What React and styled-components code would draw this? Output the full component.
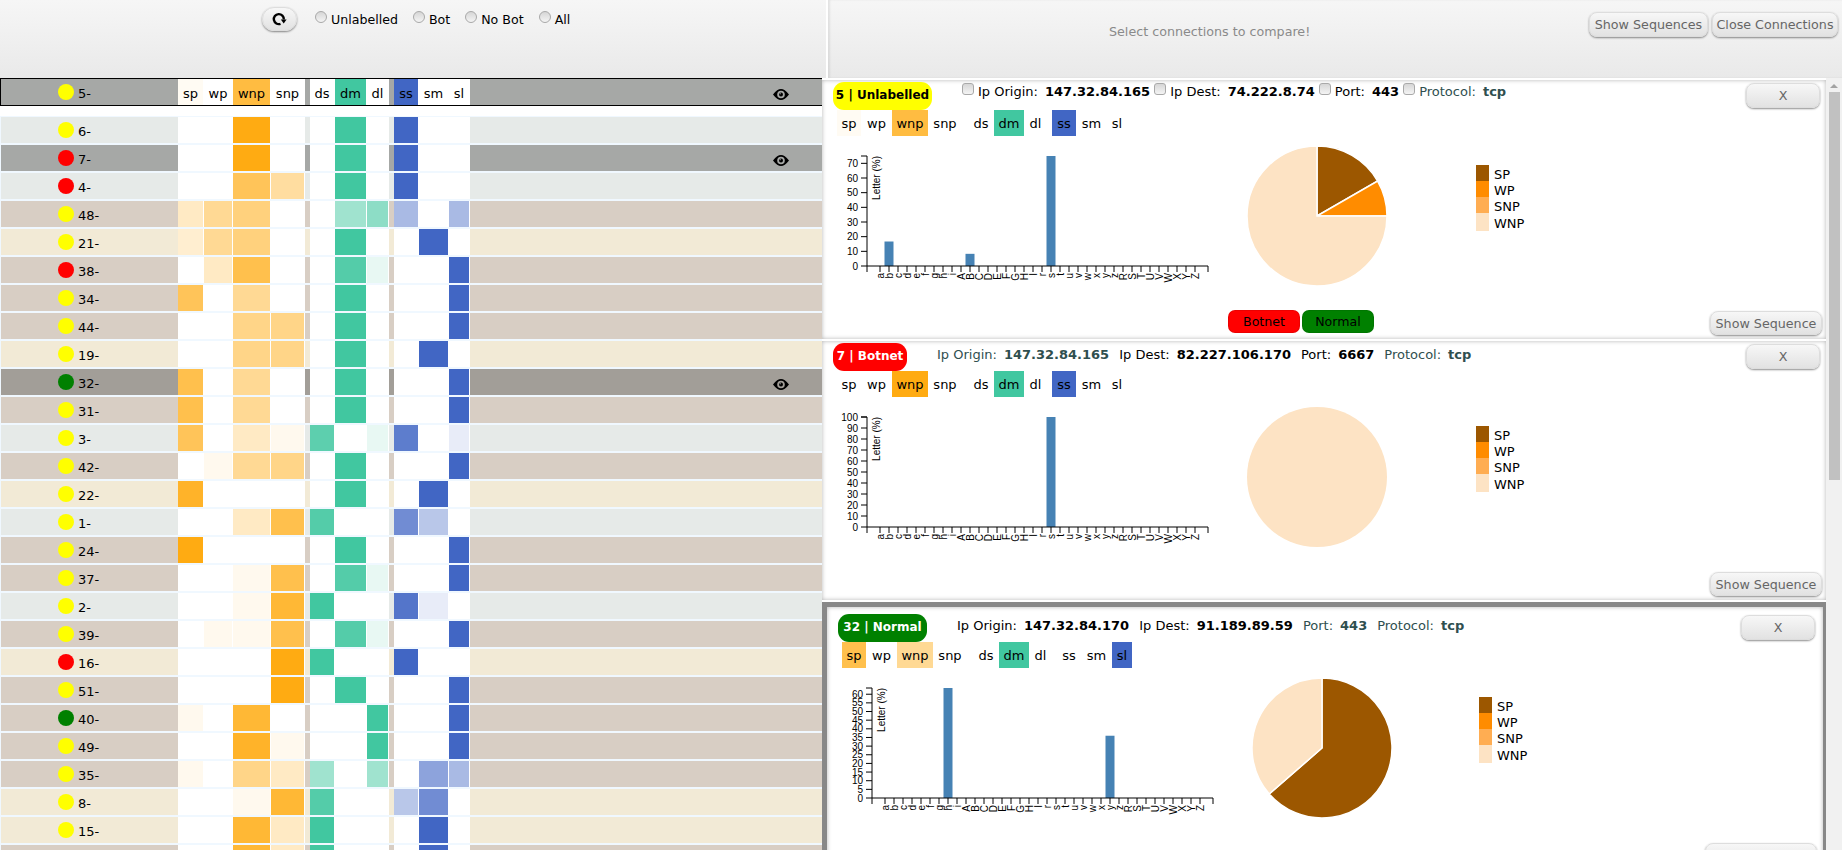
import React from "react";
import styled, { createGlobalStyle } from "styled-components";

const ORANGE = "255, 171, 18";
const TEAL = "65, 199, 160";
const BLUE = "65, 102, 196";

const ROW_COLORS = {
  tan: "#d8cec4",
  cream: "#f2ead6",
  light: "#e6eae8",
  picked: "#a6a8a6",
  pickedTan: "#a29e98",
};

const STATUS = { y: "#ffff00", r: "#ff0000", g: "#008000" };

const groups = [
  { color: ORANGE, width: 127, labels: ["sp", "wp", "wnp", "snp"], cells: [25, 28, 37, 33] },
  { color: TEAL, width: 79, labels: ["ds", "dm", "dl"], cells: [24, 31, 21] },
  { color: BLUE, width: 76, labels: ["ss", "sm", "sl"], cells: [24, 29, 20] },
];

const rows = [
  ["6", "y", "light", [0, 0, 1, 0], [0, 1, 0], [1, 0, 0]],
  ["7", "r", "picked", [0, 0, 1, 0], [0, 1, 0], [1, 0, 0], true],
  ["4", "r", "light", [0, 0, 0.7, 0.4], [0, 1, 0], [1, 0, 0]],
  ["48", "y", "tan", [0.25, 0.45, 0.55, 0], [0, 0.5, 0.6], [0.45, 0, 0.45]],
  ["21", "y", "cream", [0.2, 0.45, 0.55, 0], [0, 1, 0], [0, 1, 0]],
  ["38", "r", "tan", [0, 0.25, 0.75, 0], [0, 0.9, 0.12], [0, 0, 1]],
  ["34", "y", "tan", [0.7, 0, 0.45, 0], [0, 1, 0], [0, 0, 1]],
  ["44", "y", "tan", [0, 0, 0.5, 0.5], [0, 1, 0], [0, 0, 1]],
  ["19", "y", "cream", [0, 0, 0.5, 0.5], [0, 1, 0], [0, 1, 0]],
  ["32", "g", "pickedTan", [0.75, 0, 0.45, 0], [0, 1, 0], [0, 0, 1], true],
  ["31", "y", "tan", [0.75, 0, 0.45, 0], [0, 1, 0], [0, 0, 1]],
  ["3", "y", "light", [0.7, 0, 0.25, 0.07], [0.85, 0, 0.12], [0.85, 0, 0.12]],
  ["42", "y", "tan", [0, 0.07, 0.45, 0.5], [0, 1, 0], [0, 0, 1]],
  ["22", "y", "cream", [0.9, 0, 0, 0], [0, 1, 0], [0, 1, 0]],
  ["1", "y", "light", [0, 0, 0.25, 0.75], [0.9, 0, 0], [0.75, 0.37, 0]],
  ["24", "y", "tan", [1, 0, 0, 0], [0, 1, 0], [0, 0, 1]],
  ["37", "y", "tan", [0, 0, 0.07, 0.75], [0, 0.9, 0.12], [0, 0, 1]],
  ["2", "y", "light", [0, 0, 0.07, 0.85], [1, 0, 0], [0.9, 0.12, 0]],
  ["39", "y", "tan", [0, 0.07, 0.07, 0.75], [0, 0.9, 0.12], [0, 0, 1]],
  ["16", "r", "cream", [0, 0, 0, 1], [1, 0, 0], [1, 0, 0]],
  ["51", "y", "tan", [0, 0, 0, 1], [0, 1, 0], [0, 0, 1]],
  ["40", "g", "tan", [0.07, 0, 0.85, 0], [0, 0, 1], [0, 0, 1]],
  ["49", "y", "tan", [0, 0, 0.9, 0.07], [0, 0, 1], [0, 0, 1]],
  ["35", "y", "tan", [0.07, 0, 0.5, 0.25], [0.5, 0, 0.5], [0, 0.6, 0.45]],
  ["8", "y", "cream", [0, 0, 0.07, 0.85], [0.9, 0, 0], [0.37, 0.75, 0]],
  ["15", "y", "cream", [0, 0, 0.85, 0.25], [1, 0, 0], [0, 1, 0]],
  // last row only shows its top edge, the name is below the fold
  [null, null, "tan", [0, 0, 0.85, 0.25], [1, 0, 0], [0, 1, 0]],
];

const LETTERS = "abcdefghiABCDEFGHIrstuvwxyzRSTUVWXYZ".split("");
const SLATE = "#2f4f4f";

const cards = [
  {
    title: "5 | Unlabelled",
    badge: "#ffff00",
    badgeText: "#000",
    badgeWidth: 99,
    checks: true,
    fields: [
      ["Ip Origin:", "147.32.84.165"],
      ["Ip Dest:", "74.222.8.74"],
      ["Port:", "443"],
      ["Protocol:", "tcp", SLATE],
    ],
    chips: [[0.05, 0, 0.8, 0], [0, 1, 0], [1, 0, 0]],
    yMax: 75,
    yStep: 10,
    bars: [[1, 16.7], [10, 8.3], [19, 75]],
    slices: [["#9c5700", 16.67], ["#ff8c00", 8.33], ["#fde3c4", 75]],
    vote: true,
  },
  {
    title: "7 | Botnet",
    badge: "#ff0000",
    badgeText: "#fff",
    badgeWidth: 74,
    fields: [
      ["Ip Origin:", "147.32.84.165", SLATE],
      ["Ip Dest:", "82.227.106.170"],
      ["Port:", "6667"],
      ["Protocol:", "tcp", SLATE],
    ],
    chips: [[0, 0, 1, 0], [0, 1, 0], [1, 0, 0]],
    yMax: 100,
    yStep: 10,
    bars: [[19, 100]],
    slices: [["#fde3c4", 100]],
  },
  {
    title: "32 | Normal",
    badge: "#008000",
    badgeText: "#fff",
    badgeWidth: 89,
    selected: true,
    fields: [
      ["Ip Origin:", "147.32.84.170"],
      ["Ip Dest:", "91.189.89.59"],
      ["Port:", "443", SLATE],
      ["Protocol:", "tcp", SLATE],
    ],
    chips: [[0.75, 0, 0.45, 0], [0, 1, 0], [0, 0, 1]],
    yMax: 63.6,
    yStep: 5,
    bars: [[7, 63.6], [25, 36]],
    slices: [["#9c5700", 63.6], ["#fde3c4", 36.4]],
  },
];

const legend = [
  ["SP", "#9c5700", 16],
  ["WP", "#ff8c00", 16],
  ["SNP", "#ffad52", 16],
  ["WNP", "#fde3c4", 18],
];

const chipWidths = [[24, 31, 36, 34], [26, 30, 23], [24, 31, 20]];

const GlobalStyle = createGlobalStyle`
  html, body {
    margin: 0;
    height: 100%;
    overflow: hidden;
    background: #fff;
  }
  body {
    font-family: "DejaVu Sans", sans-serif;
    font-size: 13px;
    color: #000;
  }
`;

const Page = styled.div`
  display: flex;
  height: 100vh;
  overflow: hidden;
`;

const LeftColumn = styled.div`
  width: 822px;
  flex: none;
  display: flex;
  flex-direction: column;
`;

const RightColumn = styled.div`
  width: 1020px;
  flex: none;
  display: flex;
  flex-direction: column;
`;

const TopBar = styled.div`
  display: flex;
  flex: none;
  height: 78px;
  box-sizing: border-box;
  background: linear-gradient(#f6f6f6, #e9e9e9);
`;

const LeftBar = styled(TopBar)`
  margin-right: -4px;
  padding-left: 262px;
`;

const RightBar = styled(TopBar)`
  margin-left: 6px;
  padding-right: 4px;
  box-shadow: inset 2px 0 2px rgba(0, 0, 0, 0.08);
`;

const RoundButton = styled.button`
  box-sizing: border-box;
  font: inherit;
  font-size: 12.7px;
  padding: 0;
  color: #666;
  border: 1px solid #ddd;
  border-radius: 8px;
  background: linear-gradient(#f7f7f7, #e2e2e2);
  box-shadow: 0 1px 2px rgba(0, 0, 0, 0.45);
`;

const RefreshButton = styled(RoundButton)`
  display: flex;
  align-items: center;
  justify-content: center;
  width: 35px;
  height: 24px;
  margin-top: 7px;
  margin-right: 18px;
  border-radius: 12px;
`;

const RadioLabel = styled.label`
  display: flex;
  align-items: flex-start;
  margin-right: 15px;
  font-size: 12.6px;
`;

const RoundInput = styled.input`
  appearance: none;
  width: 12px;
  height: 12px;
  margin: 0 4px 0 0;
  flex: none;
  box-sizing: border-box;
  border: 1px solid #a9a9a9;
  background: linear-gradient(#d6d6d6, #f4f4f4);
`;

const Radio = styled(RoundInput)`
  margin-top: 11px;
  border-radius: 50%;
`;

const RadioText = styled.span`
  margin-top: 12px;
  line-height: 16px;
`;

const Notice = styled.div`
  margin: 24px 0 0 281px;
  line-height: 16px;
  font-size: 12.7px;
  color: #8a8a8a;
`;

const BarButtons = styled.div`
  display: flex;
  gap: 4px;
  margin: 12px 0 0 auto;
`;

const BarButton = styled(RoundButton)`
  height: 25px;
  width: ${(p) => p.$w}px;
`;

const Row = styled.div`
  display: flex;
  flex: none;
  height: 26px;
  border-left: 1px solid #f0f8ff;
  background: ${(p) => ROW_COLORS[p.$bg]};
`;

const HeaderRow = styled(Row)`
  height: 28px;
  box-sizing: border-box;
  border: 1px solid #000;
  border-right: 0;
`;

const RowList = styled.div`
  flex: 1;
  min-height: 0;
  margin-top: 10px;
  padding-top: 1px;
  display: flex;
  flex-direction: column;
  gap: 2px;
  overflow: hidden;
  background: #f0f8ff;
`;

const NameCell = styled.div`
  display: flex;
  align-items: center;
  width: 177px;
  flex: none;
  box-sizing: border-box;
  padding-left: 57px;
`;

const RowName = styled.span`
  padding-top: 2px;
`;

const Dot = styled.span`
  width: 16px;
  height: 16px;
  margin-right: 4px;
  border-radius: 50%;
  background: ${(p) => STATUS[p.$status]};
`;

const CellGroup = styled.div`
  display: flex;
  flex: none;
  gap: 1px;
  width: ${(p) => p.$w}px;
  margin-right: 5px;
  background: #fff;
`;

const Cell = styled.div`
  display: flex;
  align-items: center;
  justify-content: center;
  flex: none;
  width: ${(p) => p.$w}px;
  background: rgba(${(p) => p.$rgb}, ${(p) => p.$o});
`;

const HeaderCell = styled(Cell)`
  padding-top: 2px;
`;

const RowEnd = styled.div`
  flex: 1;
  margin-left: -5px;
  display: flex;
  align-items: center;
  justify-content: flex-end;
  padding: 4px 33px 0 0;
`;

const Lower = styled.div`
  display: flex;
  flex: 1;
  min-height: 0;
`;

const CardColumn = styled.div`
  width: 1004px;
  flex: none;
  padding-top: 2px;
  display: flex;
  flex-direction: column;
  gap: 2px;
  overflow: hidden;
`;

const Card = styled.div`
  flex: none;
  box-sizing: border-box;
  height: 259px;
  padding: 2px 6px 0 11px;
  background: #fff;
  box-shadow: inset 0 0 4px rgba(0, 0, 0, 0.3);
`;

const SelectedCard = styled(Card)`
  height: 300px;
  padding: 7px 8px 0 11px;
  border: 5px solid #888;
  border-width: 5px 3px 0 5px;
`;

const CardHeader = styled.div`
  display: flex;
  align-items: flex-start;
  height: 28px;
`;

const Badge = styled.div`
  width: ${(p) => p.$w}px;
  height: 28px;
  line-height: 26px;
  flex: none;
  text-align: center;
  font-weight: bold;
  font-size: 12px;
  border-radius: 11px;
  color: ${(p) => p.$text};
  background: ${(p) => p.$bg};
`;

const Fields = styled.div`
  display: flex;
  gap: ${(p) => (p.$checks ? 4 : 10)}px;
  margin-left: 30px;
  margin-top: ${(p) => (p.$checks ? 2 : 4)}px;
  line-height: 16px;
  white-space: nowrap;
`;

const Field = styled.div`
  display: flex;
  align-items: flex-start;
  color: ${(p) => p.$color || "#000"};
`;

const Check = styled(RoundInput)`
  margin-top: -1px;
  border-radius: 3px;
`;

const FieldValue = styled.b`
  margin-left: 7px;
`;

const CloseButton = styled(RoundButton)`
  width: 74px;
  height: 25px;
  margin: 1px 0 0 auto;
`;

const Chips = styled.div`
  display: flex;
  height: 26px;
  margin-left: 4px;
`;

const ChipGroup = styled.div`
  display: flex;
  margin-right: ${(p) => p.$gap}px;
`;

const Body = styled.div`
  display: flex;
  align-items: flex-start;
  height: 173px;
`;

const PieBox = styled.svg`
  flex: none;
  margin: 5px 0 0 9px;
`;

const Legend = styled.div`
  display: flex;
  flex-direction: column;
  margin: 29px 0 0 ${(p) => (p.$selected ? 82 : 84)}px;
`;

const LegendRow = styled.div`
  display: flex;
  align-items: center;
  height: ${(p) => p.$h}px;
  line-height: 16px;
`;

const LegendName = styled.span`
  padding-top: 3px;
`;

const Swatch = styled.span`
  width: 13px;
  height: 100%;
  margin-right: 5px;
  background: ${(p) => p.$color};
`;

const Footer = styled.div`
  display: flex;
  align-items: flex-start;
  height: 26px;
`;

const VoteButton = styled.button`
  width: 72px;
  height: 23px;
  margin-right: 2px;
  padding: 0;
  font: inherit;
  font-size: 12.6px;
  color: #000;
  border: 1px solid rgba(0, 0, 0, 0.08);
  border-radius: 7px;
  background: ${(p) => p.$bg};
`;

const Votes = styled.div`
  display: flex;
  margin: 1px 0 0 395px;
`;

const SequenceButton = styled(RoundButton)`
  width: 112px;
  height: 24px;
  margin: 2px -2px 0 auto;
`;

const ScrollTrack = styled.div`
  width: 16px;
  flex: none;
  background: #f1f1f1;
  display: flex;
  flex-direction: column;
  align-items: center;
  padding-top: 6px;
`;

const ScrollArrow = styled.span`
  border: 4px solid transparent;
  border-top: 0;
  border-bottom: 4px solid #a3a3a3;
  margin-bottom: 4px;
`;

const ScrollThumb = styled.div`
  width: 11px;
  height: 388px;
  background: #c1c1c1;
`;

const AxisText = styled.text`
  font-family: "Liberation Sans", Arial, sans-serif;
  font-size: 10px;
  fill: #000;
`;

const RefreshIcon = () => (
  <svg width="15" height="15" viewBox="0 0 15 15">
    <path d="M8.5 11.8A5 5 0 1 1 11.8 7.5" fill="none" stroke="#000" strokeWidth="2.4" />
    <polygon points="8.8,7.5 14.6,7.5 11.7,11.4" fill="#000" />
  </svg>
);

const EyeIcon = () => (
  <svg width="16" height="11" viewBox="0 0 16 11">
    <path
      fillRule="evenodd"
      d="M0 5.5C3 1.5 5.5 0 8 0s5 1.5 8 5.5c-3 4-5.5 5.5-8 5.5S3 9.500 0 5.500zM8 1.700a3.800 3.800 0 1 0 0 7.600a3.800 3.800 0 1 0 0-7.600z"
    />
    <circle cx="8" cy="5.5" r="2" />
    <circle cx="7.200" cy="4.700" r="0.600" fill="#aaa" />
  </svg>
);

// d3 style bar chart, margins taken from the axis in the page
const BarChart = ({ yMax, yStep, bars }) => {
  const top = 20;
  const bottom = 130;
  const y = (v) => bottom - (v / yMax) * (bottom - top);
  const x = (i) => 47 + i * 9;
  const ticks = [];
  for (let v = 0; v <= yMax; v += yStep) ticks.push(v);
  return (
    <svg width="400" height="150" style={{ flex: "none" }}>
      {bars.map(([i, v]) => (
        <rect key={i} x={x(i) - 4.5} y={y(v)} width="9" height={bottom - y(v)} fill="#4682b4" />
      ))}
      <path d={`M28 ${top}H34V${bottom}H375V${bottom + 6}`} fill="none" stroke="#000" />
      <path d={`M34 ${bottom}V${bottom + 6}`} stroke="#000" />
      {ticks.map((v) => (
        <g key={v}>
          <line x1="28" x2="34" y1={y(v)} y2={y(v)} stroke="#000" />
          <AxisText x="25" y={y(v) + 3.5} textAnchor="end">{v}</AxisText>
        </g>
      ))}
      {LETTERS.map((l, i) => (
        <g key={l}>
          <line x1={x(i)} x2={x(i)} y1={bottom} y2={bottom + 6} stroke="#000" />
          <AxisText
            textAnchor="end"
            transform={`translate(${x(i) + 3.5},${bottom + 7}) rotate(-90)`}
          >
            {l}
          </AxisText>
        </g>
      ))}
      <AxisText textAnchor="end" transform={`translate(47,${top}) rotate(-90)`}>
        Letter (%)
      </AxisText>
    </svg>
  );
};

const Pie = ({ slices }) => {
  const r = 70;
  let start = 0;
  return (
    <PieBox width="150" height="150" viewBox="-75 -75 150 150">
      {slices.map(([color, pct]) => {
        if (pct === 100) return <circle key={color} r={r} fill={color} />;
        const a0 = (start / 100) * 2 * Math.PI;
        const a1 = ((start + pct) / 100) * 2 * Math.PI;
        start += pct;
        const big = pct > 50 ? 1 : 0;
        const d = `M0 0L${r * Math.sin(a0)} ${-r * Math.cos(a0)}A${r} ${r} 0 ${big} 1 ${r * Math.sin(a1)} ${-r * Math.cos(a1)}Z`;
        return <path key={color} d={d} fill={color} stroke="#fff" strokeWidth="1.5" />;
      })}
    </PieBox>
  );
};

const ConnectionCard = ({ card }) => {
  const Box = card.selected ? SelectedCard : Card;
  return (
    <Box>
      <CardHeader>
        <Badge $w={card.badgeWidth} $bg={card.badge} $text={card.badgeText}>
          {card.title}
        </Badge>
        <Fields $checks={card.checks}>
          {card.fields.map(([label, value, color]) => (
            <Field key={label} $color={color}>
              {card.checks && <Check type="checkbox" readOnly />}
              {label}
              <FieldValue>{value}</FieldValue>
            </Field>
          ))}
        </Fields>
        <CloseButton>X</CloseButton>
      </CardHeader>
      <Chips>
        {groups.map((g, gi) => (
          <ChipGroup key={gi} $gap={gi === 0 ? 6 : gi === 1 ? 5 : 0}>
            {g.labels.map((l, i) => (
              <Cell key={l} $w={chipWidths[gi][i]} $rgb={g.color} $o={card.chips[gi][i]}>
                {l}
              </Cell>
            ))}
          </ChipGroup>
        ))}
      </Chips>
      <Body>
        <BarChart yMax={card.yMax} yStep={card.yStep} bars={card.bars} />
        <Pie slices={card.slices} />
        <Legend $selected={card.selected}>
          {legend.map(([name, color, h]) => (
            <LegendRow key={name} $h={h}>
              <Swatch $color={color} />
              <LegendName>{name}</LegendName>
            </LegendRow>
          ))}
        </Legend>
      </Body>
      <Footer>
        {card.vote && (
          <Votes>
            <VoteButton $bg="#ff0000">Botnet</VoteButton>
            <VoteButton $bg="#008000">Normal</VoteButton>
          </Votes>
        )}
        {/* the selected card's label falls below the window, only its top edge shows */}
        <SequenceButton>{card.selected ? null : "Show Sequence"}</SequenceButton>
      </Footer>
    </Box>
  );
};

const RowCells = ({ values, labelled }) =>
  groups.map((g, gi) => (
    <CellGroup key={gi} $w={g.width}>
      {g.cells.map((w, i) =>
        labelled ? (
          <HeaderCell key={i} $w={w} $rgb={g.color} $o={values[gi][i]}>
            {g.labels[i]}
          </HeaderCell>
        ) : (
          <Cell key={i} $w={w} $rgb={g.color} $o={values[gi][i]} />
        )
      )}
    </CellGroup>
  ));

const App = () => {
  return (
    <Page>
      <GlobalStyle />
      <LeftColumn>
        <LeftBar>
          <RefreshButton>
            <RefreshIcon />
          </RefreshButton>
          {["Unlabelled", "Bot", "No Bot", "All"].map((name) => (
            <RadioLabel key={name}>
              <Radio type="radio" name="filter" />
              <RadioText>{name}</RadioText>
            </RadioLabel>
          ))}
        </LeftBar>
        <HeaderRow $bg="picked">
          <NameCell>
            <Dot $status="y" />
            <RowName>5-</RowName>
          </NameCell>
          <RowCells labelled values={[[0.05, 0, 0.8, 0], [0, 1, 0], [1, 0, 0]]} />
          <RowEnd>
            <EyeIcon />
          </RowEnd>
        </HeaderRow>
        <RowList>
          {rows.map(([id, status, bg, a, b, c, eye], i) => (
            <Row key={i} $bg={bg}>
              <NameCell>
                {id && <Dot $status={status} />}
                {id && <RowName>{id}-</RowName>}
              </NameCell>
              <RowCells values={[a, b, c]} />
              <RowEnd>{eye && <EyeIcon />}</RowEnd>
            </Row>
          ))}
        </RowList>
      </LeftColumn>
      <RightColumn>
        <RightBar>
          <Notice>Select connections to compare!</Notice>
          <BarButtons>
            <BarButton $w={119}>Show Sequences</BarButton>
            <BarButton $w={126}>Close Connections</BarButton>
          </BarButtons>
        </RightBar>
        <Lower>
          <CardColumn>
            {cards.map((card) => (
              <ConnectionCard key={card.title} card={card} />
            ))}
          </CardColumn>
          <ScrollTrack>
            <ScrollArrow />
            <ScrollThumb />
          </ScrollTrack>
        </Lower>
      </RightColumn>
    </Page>
  );
};

export default App;
